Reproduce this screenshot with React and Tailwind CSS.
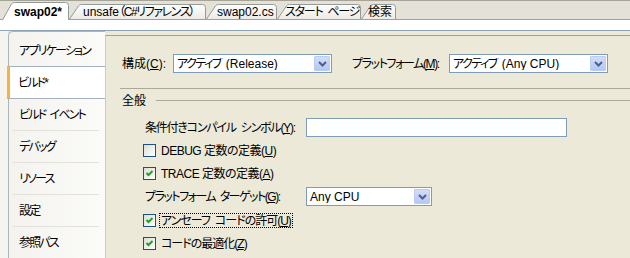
const TABS = [
  { label: <>unsafe<span className="tracking-[-1.4px]">（C#リファレンス）</span></>, key: "unsafe", w: 137, pl: 14 },
  { label: "swap02.cs", w: 71, pl: 11 },
  { label: <span className="tracking-[-1.2px]">スタート{"\u2002"}ページ</span>, key: "start", w: 84, pl: 8 },
  { label: "検索", w: 35, pl: 7 },
];

const NAV = ["アプリケーション", "ビルド*", "ビルド\u2002イベント", "デバッグ", "リソース", "設定", "参照パス"];

function Tab({ label, w, pl, active, z }) {
  const h = active ? 18 : 15;
  const d = `M0.5 ${h} L9.5 2 Q10.5 0.5 12.5 0.5 H${w - 3.5} Q${w - 0.5} 0.5 ${w - 0.5} 3.5 V${h}`;
  return (
    <div
      className={`relative shrink-0 ${active ? "h-[18px] -mb-px font-bold" : "h-[15px]"}`}
      style={{ width: w, zIndex: z }}
    >
      <svg className="absolute inset-0" width={w} height={h}>
        <defs>
          <linearGradient id="tabg" x1="0" y1="0" x2="0" y2="1">
            <stop offset="0" stopColor="#fdfdfc" />
            <stop offset="1" stopColor="#ecebe5" />
          </linearGradient>
        </defs>
        <path d={d} fill={active ? "#ffffff" : "url(#tabg)"} stroke="#919b9c" />
      </svg>
      <span
        className={`relative flex h-full items-center ${active ? "pt-[2px]" : "pt-px"}`}
        style={{ paddingLeft: pl }}
      >
        {label}
      </span>
    </div>
  );
}

function Chevron() {
  return (
    <svg width="9" height="6" viewBox="0 0 9 6">
      <path d="M1 1 L4.5 4.5 L8 1" fill="none" stroke="#4d6185" strokeWidth="2" />
    </svg>
  );
}

function Select({ jp, text, w }) {
  return (
    <div className="flex h-[19px] shrink-0 items-center border border-[#7f9db9] bg-white" style={{ width: w }}>
      <span className="flex flex-1 truncate pl-[3px]">
        {jp && <span className="mr-[5px] tracking-[-1.5px]">{jp}</span>}
        <span>{text}</span>
      </span>
      <span className="mr-px flex h-[15px] w-[16px] items-center justify-center rounded-[1px] border border-[#bccbf0] bg-gradient-to-b from-[#d3ddfb] to-[#b4c7f4]">
        <Chevron />
      </span>
    </div>
  );
}

function Checkbox({ checked }) {
  return (
    <span className="flex h-[13px] w-[13px] shrink-0 items-center justify-center border border-[#1c5180] bg-gradient-to-br from-[#dcdcd7] to-white">
      {checked && (
        <svg width="11" height="11" viewBox="0 0 11 11">
          <path d="M2.5 5 L4.5 7 L8.5 3" fill="none" stroke="#21a121" strokeWidth="2" />
        </svg>
      )}
    </span>
  );
}

function CheckRow({ checked, focus, children, mt, track = "tracking-[-1px]" }) {
  return (
    <div className={`flex h-[13px] items-center pl-[37px] ${mt}`}>
      <Checkbox checked={checked} />
      {focus ? (
        <span className={`ml-[3px] flex h-[15px] items-center border border-dotted border-black px-px ${track}`}>
          {children}
        </span>
      ) : (
        <span className={`ml-[5px] ${track}`}>{children}</span>
      )}
    </div>
  );
}

export default function App() {
  return (
    <div className="flex h-[258px] w-[630px] flex-col overflow-hidden whitespace-nowrap bg-[#ece9d8] font-['Liberation_Sans','Noto_Sans_CJK_JP',sans-serif] text-[12px] leading-none text-black [font-feature-settings:'palt']">
      {/* tab strip */}
      <div className="flex h-[19px] shrink-0 items-end border-t border-[#a8a495] bg-[#e3e1d8] pl-[2px]">
        <Tab label="swap02*" w={67} pl={12} active z={20} />
        {TABS.map((t, i) => (
          <Tab key={t.key || t.label} {...t} z={10 - i} />
        ))}
      </div>
      <div className="h-[12px] shrink-0 border-y border-[#8fa3b6] bg-white" />

      <div className="flex flex-1">
        <div className="w-[8px] shrink-0 bg-[#f5f4ef]" />

        {/* sidebar */}
        <div className="flex w-[97px] shrink-0 flex-col rounded-tl-[5px] border-l border-t border-[#a9b6c2] bg-gradient-to-r from-[#f4f3ee] to-[#fbfbf9] pt-[3px] tracking-[-1.8px]">
          {NAV.map((n, i) =>
            i === 1 ? (
              <div
                key={n}
                className="relative z-10 -ml-[2px] -mt-px flex h-[33px] items-center border-y border-l-[3px] border-y-[#a3b1be] border-l-[#f5b53d] bg-white pl-[8px]"
              >
                {n}
              </div>
            ) : (
              <div key={n} className="flex h-[32px] shrink-0 flex-col">
                <div className="flex flex-1 items-center pl-[10px]">{n}</div>
                <div className="ml-[4px] mr-[6px] h-px bg-[#e3e2da]" />
              </div>
            )
          )}
        </div>

        {/* content */}
        <div className="flex flex-1 flex-col pt-[4px]">
          <div className="flex flex-1 flex-col border-l border-t border-l-[#c3ccdb] border-t-[#8fa3b6]">
            <div className="mt-[18px] flex items-center pl-[16px]">
              <span className="w-[51px]">
                構成(<u>C</u>):
              </span>
              <Select jp="アクティブ" text="(Release)" w={159} />
              <span className="ml-[20px] w-[97px] tracking-[-1.4px]">
                プラットフォーム(<u>M</u>):
              </span>
              <Select jp="アクティブ" text="(Any CPU)" w={159} />
            </div>

            <div className="ml-[14px] mt-[15px] h-px bg-[#aca899]" />

            <div className="mt-[4px] flex h-[15px] items-center pl-[16px]">
              <span>全般</span>
              <div className="ml-[10px] h-px flex-1 bg-[#aca899]" />
            </div>

            <div className="mt-[10px] flex items-center pl-[39px]">
              <span className="w-[161px] tracking-[-1.2px]">
                条件付きコンパイル{"\u2002"}シンボル(<u>Y</u>):
              </span>
              <div className="h-[19px] w-[261px] border border-[#7f9db9] bg-white" />
            </div>

            <CheckRow mt="mt-[7px]" track="tracking-[-0.5px]">
              DEBUG 定数の定義(<u>U</u>)
            </CheckRow>
            <CheckRow checked mt="mt-[10px]" track="tracking-[-0.5px]">
              TRACE 定数の定義(<u>A</u>)
            </CheckRow>

            <div className="mt-[7px] flex items-center pl-[39px]">
              <span className="w-[161px] tracking-[-1.5px]">
                プラットフォーム{"\u2002"}ターゲット(<u>G</u>):
              </span>
              <Select text="Any CPU" w={126} />
            </div>

            <CheckRow checked focus mt="mt-[8px]">
              アンセーフ{"\u2002"}コードの許可(<u>U</u>)
            </CheckRow>
            <CheckRow checked mt="mt-[10px]">
              コードの最適化(<u>Z</u>)
            </CheckRow>
          </div>
        </div>
      </div>
    </div>
  );
}
